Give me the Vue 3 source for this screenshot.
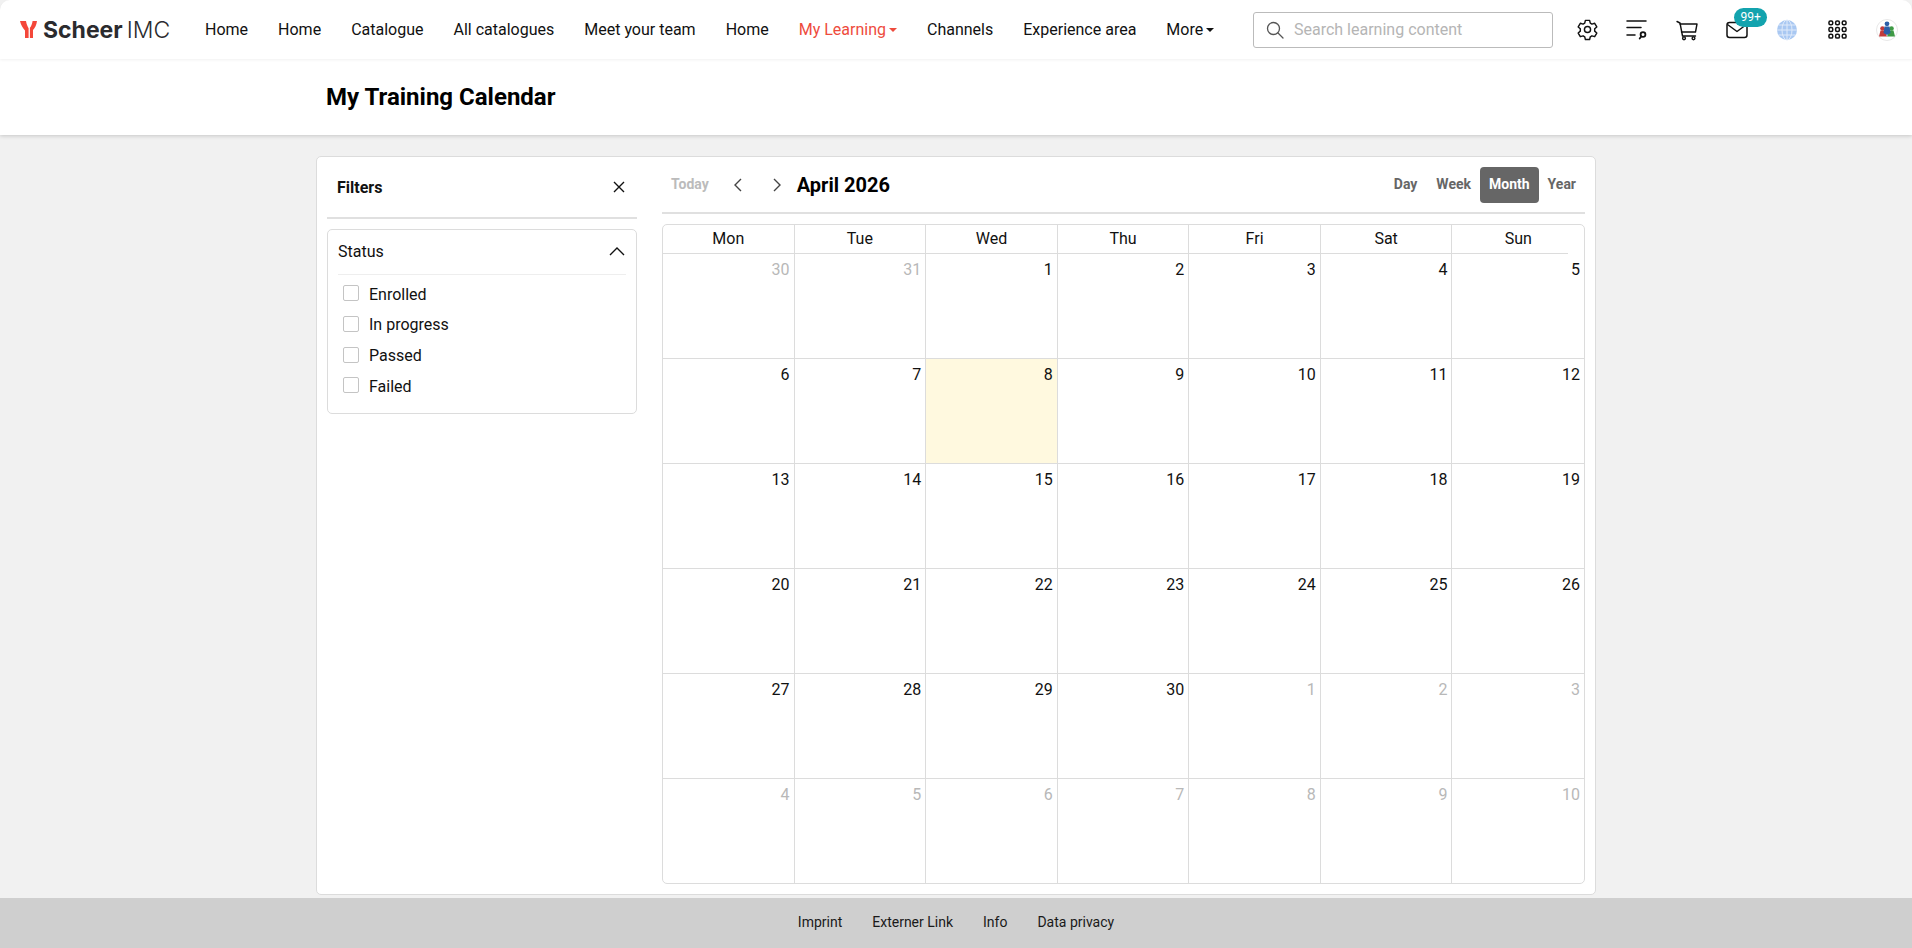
<script setup>
const navItems = [
  { label: 'Home' },
  { label: 'Home' },
  { label: 'Catalogue' },
  { label: 'All catalogues' },
  { label: 'Meet your team' },
  { label: 'Home' },
  { label: 'My Learning', active: true, caret: true },
  { label: 'Channels' },
  { label: 'Experience area' },
  { label: 'More', caret: true }
]

const statuses = ['Enrolled', 'In progress', 'Passed', 'Failed']
const weekdays = ['Mon', 'Tue', 'Wed', 'Thu', 'Fri', 'Sat', 'Sun']
const views = ['Day', 'Week', 'Month', 'Year']
const footerLinks = ['Imprint', 'Externer Link', 'Info', 'Data privacy']

// March 30 up to May 10, six full weeks
const days = []
for (const n of [30, 31]) days.push({ n, muted: true })
for (let n = 1; n <= 30; n++) days.push({ n, today: n === 8 })
for (let n = 1; n <= 10; n++) days.push({ n, muted: true })
</script>

<template>
  <div class="page">
    <header class="topbar">
      <div class="logo">
        <svg class="logo-mark" viewBox="0 0 17 17" width="17" height="17">
          <path d="M0 0h6c.5 3 1.500 5.500 2.600 7.300V17H5V9.500C2.800 7 .8 4 0 0z" fill="#f4473a" />
          <path d="M17 0h-4.400c-.5 3-1.200 5-2.700 6.800V17h3.100V9C15 7 16.500 4 17 0z" fill="#f4473a" />
        </svg>
        <span class="logo-bold">Scheer</span>
        <span class="logo-light">IMC</span>
      </div>

      <nav class="nav">
        <a v-for="(item, i) in navItems" :key="i" class="nav-item" :class="{ active: item.active }">
          {{ item.label }}<span v-if="item.caret" class="caret"></span>
        </a>
      </nav>

      <div class="search">
        <svg viewBox="0 0 20 20" width="20" height="20" fill="none" stroke="#555" stroke-width="1.300">
          <circle cx="8.500" cy="8.500" r="6" />
          <path d="M13 13l5 5" stroke-linecap="round" />
        </svg>
        <input class="search-input" placeholder="Search learning content" />
      </div>

      <div class="icons">
        <span class="icon-slot">
          <svg viewBox="0 0 24 24" width="23" height="23" fill="none" stroke="#111" stroke-width="1.500" stroke-linejoin="round">
            <path d="M9.800 2.500h4.400l.7 2.900 1.700 1 2.900-.9 2.200 3.800-2.200 2v2.400l2.200 2-2.200 3.800-2.900-.9-1.700 1-.7 2.900H9.800l-.7-2.900-1.700-1-2.900.9-2.200-3.800 2.200-2v-2.400l-2.200-2 2.200-3.800 2.900.9 1.700-1z" />
            <circle cx="12" cy="12" r="3.200" />
          </svg>
        </span>
        <span class="icon-slot">
          <svg viewBox="0 0 24 24" width="24" height="24" fill="none" stroke="#111" stroke-width="1.500" stroke-linecap="round">
            <path d="M2 3h19M2 9.500h14M2 17h8" />
            <circle cx="18" cy="16.500" r="2.400" stroke-width="1.800" />
            <path d="M16.200 18.500l-1.500 2" stroke-width="1.800" />
          </svg>
        </span>
        <span class="icon-slot">
          <svg viewBox="0 0 24 24" width="24" height="24" fill="none" stroke="#111" stroke-width="1.400" stroke-linejoin="round" stroke-linecap="round">
            <path d="M2 3.500l3 1.500 2.500 13h13" />
            <path d="M5 6h17l-1.500 8H6.500" />
            <circle cx="9" cy="20.300" r="1.400" />
            <circle cx="18.500" cy="20.300" r="1.400" />
          </svg>
        </span>
        <span class="icon-slot">
          <svg viewBox="0 0 24 24" width="24" height="24" fill="none" stroke="#111" stroke-width="1.500" stroke-linejoin="round">
            <rect x="2" y="4.500" width="20" height="15" rx="2.500" />
            <path d="M2.500 6.500L12 13.500l9.500-7" />
          </svg>
          <span class="badge">99+</span>
        </span>
        <span class="icon-slot">
          <svg viewBox="0 0 22 22" width="22" height="22">
            <circle cx="11" cy="11" r="10" fill="#a9c8f2" />
            <g fill="none" stroke="#dfeafa" stroke-width="1">
              <ellipse cx="11" cy="11" rx="5" ry="10" />
              <path d="M11 1v20M1 11h20M2.500 6h17M2.500 16h17" />
            </g>
          </svg>
        </span>
        <span class="icon-slot">
          <svg viewBox="0 0 20 20" width="19" height="19" fill="none" stroke="#111" stroke-width="1.600">
            <g v-for="x in [3, 10, 17]" :key="x">
              <rect v-for="y in [3, 10, 17]" :key="y" :x="x - 2" :y="y - 2" width="4" height="4" rx="1.500" />
            </g>
          </svg>
        </span>
        <span class="icon-slot">
          <svg viewBox="0 0 22 22" width="22" height="22">
            <circle cx="11" cy="11" r="10.500" fill="#fff" stroke="#e8e8e8" />
            <circle cx="6.500" cy="9.500" r="2.300" fill="#c23a3a" />
            <path d="M3 17.500l1.500-6h4l2.500 6z" fill="#c23a3a" />
            <circle cx="15.500" cy="9.500" r="2.300" fill="#3f9a45" />
            <path d="M11 17.500l2.500-6h4l1.500 6z" fill="#3f9a45" />
            <circle cx="11" cy="4.800" r="2.400" fill="#2b5ea8" />
            <path d="M8.500 7.500h5l1 6.500-3.500 2-3.500-2z" fill="#2b5ea8" />
          </svg>
        </span>
      </div>
    </header>

    <div class="title-band">
      <h1 class="page-title">My Training Calendar</h1>
    </div>

    <main class="main">
      <section class="card">
        <aside class="filters">
          <div class="filters-head">
            <span class="filters-title">Filters</span>
            <svg viewBox="0 0 12 12" width="12" height="12" fill="none" stroke="#111" stroke-width="1.400">
              <path d="M1 1l10 10M11 1L1 11" />
            </svg>
          </div>
          <div class="status-box">
            <div class="status-head">
              <span>Status</span>
              <svg viewBox="0 0 16 9" width="16" height="9" fill="none" stroke="#111" stroke-width="1.400">
                <path d="M1 8l7-7 7 7" />
              </svg>
            </div>
            <label v-for="s in statuses" :key="s" class="status-row">
              <span class="check"></span>{{ s }}
            </label>
          </div>
        </aside>

        <div class="calendar">
          <div class="toolbar">
            <span class="today-btn">Today</span>
            <svg class="arrow" viewBox="0 0 8 14" width="8" height="14" fill="none" stroke="#444" stroke-width="1.400">
              <path d="M7 1L1 7l6 6" />
            </svg>
            <svg class="arrow" viewBox="0 0 8 14" width="8" height="14" fill="none" stroke="#444" stroke-width="1.400">
              <path d="M1 1l6 6-6 6" />
            </svg>
            <span class="month-title">April 2026</span>
            <div class="views">
              <span v-for="v in views" :key="v" class="view-btn" :class="{ selected: v === 'Month' }">{{ v }}</span>
            </div>
          </div>

          <div class="grid">
            <div v-for="w in weekdays" :key="w" class="head-cell">{{ w }}</div>
            <div
              v-for="(d, i) in days"
              :key="i"
              class="day"
              :class="{ muted: d.muted, today: d.today }"
            >
              {{ d.n }}
            </div>
          </div>
        </div>
      </section>
    </main>

    <footer class="footer">
      <a v-for="f in footerLinks" :key="f">{{ f }}</a>
    </footer>
  </div>
</template>

<style>
html,
body {
  margin: 0;
  background: #f1f1f1;
}
</style>

<style scoped>
.page {
  height: 948px;
  display: flex;
  flex-direction: column;
  font-family: Roboto, "Liberation Sans", sans-serif;
  color: #111;
  background: #f1f1f1;
  overflow: hidden;
}

.topbar {
  height: 59px;
  flex: none;
  display: flex;
  align-items: center;
  padding-left: 20px;
  background: #fff;
  border-radius: 10px 10px 0 0;
  box-shadow: 0 1px 3px rgba(0, 0, 0, 0.06);
  position: relative;
  z-index: 2;
}

.logo {
  width: 185px;
  flex: none;
  display: flex;
  align-items: center;
  font-family: Inter, Roboto, sans-serif;
  font-size: 23px;
  color: #2b2b2e;
}

.logo-mark {
  margin-right: 6px;
}

.logo-bold {
  font-weight: 700;
  margin-right: 4px;
}

.logo-light {
  font-weight: 300;
}

.nav {
  display: flex;
  gap: 30px;
  width: 1048px;
  flex: none;
  font-size: 16px;
}

.nav-item {
  white-space: nowrap;
  display: flex;
  align-items: center;
  color: #111;
}

.nav-item.active {
  color: #ee4b3d;
}

.caret {
  margin-left: 3px;
  margin-top: 1px;
  border-left: 4.500px solid transparent;
  border-right: 4.500px solid transparent;
  border-top: 4.500px solid currentColor;
}

.search {
  width: 300px;
  height: 36px;
  flex: none;
  box-sizing: border-box;
  display: flex;
  align-items: center;
  gap: 9px;
  padding-left: 11px;
  border: 1px solid #bbb;
  border-radius: 3px;
}

.search-input {
  border: 0;
  outline: 0;
  padding: 0;
  width: 240px;
  font: 16px Roboto, sans-serif;
  color: #111;
}

.search-input::placeholder {
  color: #b5b5b5;
}

.icons {
  display: flex;
  margin-left: 9px;
}

.icon-slot {
  width: 50px;
  height: 30px;
  display: flex;
  align-items: center;
  justify-content: center;
  position: relative;
}

.badge {
  position: absolute;
  left: 22px;
  top: -7px;
  padding: 0 6.500px;
  height: 19px;
  line-height: 19px;
  border-radius: 10px;
  background: #13a3ae;
  color: #fff;
  font-size: 12px;
}

.title-band {
  height: 76px;
  flex: none;
  background: #fff;
  box-shadow: 0 1px 4px rgba(0, 0, 0, 0.18);
  position: relative;
  z-index: 1;
}

.page-title {
  width: 1260px;
  margin: 0 auto;
  font-size: 24px;
  font-weight: 700;
  line-height: 76px;
  color: #000;
}

.main {
  flex: 1;
  padding-top: 21px;
  min-height: 0;
}

.card {
  width: 1280px;
  height: 739px;
  box-sizing: border-box;
  margin: 0 auto;
  padding: 0 10px;
  display: flex;
  gap: 25px;
  background: #fff;
  border: 1px solid #dcdcdc;
  border-radius: 5px;
}

.filters {
  width: 310px;
  flex: none;
}

.filters-head {
  height: 62px;
  box-sizing: border-box;
  display: flex;
  align-items: center;
  justify-content: space-between;
  padding: 0 12px 0 10px;
  border-bottom: 2px solid #e0e0e0;
}

.filters-title {
  font-size: 16px;
  font-weight: 700;
}

.status-box {
  margin-top: 10px;
  height: 185px;
  box-sizing: border-box;
  padding: 0 10px;
  border: 1px solid #dcdcdc;
  border-radius: 5px;
}

.status-head {
  height: 45px;
  box-sizing: border-box;
  padding: 0 1px 2px 0;
  display: flex;
  align-items: center;
  justify-content: space-between;
  margin-bottom: 4px;
  border-bottom: 1px solid #eee;
  font-size: 16px;
}

.status-row {
  height: 30.670px;
  display: flex;
  align-items: center;
  gap: 10px;
  padding-left: 5px;
  font-size: 16px;
}

.check {
  width: 16px;
  height: 16px;
  box-sizing: border-box;
  margin-top: -2px;
  border: 1px solid #c4c4c4;
  border-radius: 2px;
  background: #fff;
}

.calendar {
  flex: 1;
  min-width: 0;
}

.toolbar {
  height: 57px;
  box-sizing: border-box;
  display: flex;
  align-items: center;
  padding-top: 1px;
  border-bottom: 2px solid #e0e0e0;
  margin-bottom: 10px;
}

.today-btn {
  margin: 0 0 3px 9px;
  font-size: 14px;
  font-weight: 700;
  color: #bbb;
}

.arrow {
  flex: none;
  margin-left: 25px;
}

.arrow + .arrow {
  margin-left: 31px;
}

.month-title {
  margin-left: 16px;
  font-size: 20px;
  font-weight: 700;
  color: #000;
}

.views {
  margin-left: auto;
  margin-bottom: 1px;
  display: flex;
  align-items: center;
  font-size: 14px;
  font-weight: 700;
  color: #666;
}

.view-btn {
  height: 36px;
  line-height: 35px;
  padding: 0 9px;
  border-radius: 4px;
}

.view-btn:first-child {
  margin-right: 1px;
}

.view-btn.selected {
  background: #666;
  color: #fff;
}

.grid {
  display: grid;
  grid-template-columns: repeat(7, 1fr);
  grid-template-rows: 29px repeat(6, 105px);
  border: 1px solid #dcdcdc;
  border-radius: 5px;
  box-sizing: border-box;
  height: 660px;
}

.head-cell {
  position: relative;
  font-size: 16px;
  line-height: 28px;
  text-align: center;
  border-right: 1px solid #dcdcdc;
  border-bottom: 1px solid #dcdcdc;
}

.head-cell:nth-child(7) {
  border-right: 0;
  border-bottom: 0;
  background: linear-gradient(#dcdcdc, #dcdcdc) left bottom / calc(100% - 16px) 1px no-repeat;
}

.day {
  box-sizing: border-box;
  padding: 5px 4px 0 0;
  font-size: 16px;
  line-height: 22px;
  text-align: right;
  border-right: 1px solid #dcdcdc;
  border-bottom: 1px solid #dcdcdc;
}

.day:nth-child(7n) {
  border-right: 0;
}

.day:nth-last-child(-n + 7) {
  border-bottom: 0;
}

.day.muted {
  color: #b8b8b8;
}

.day.today {
  background: #fff9df;
}

.footer {
  height: 50px;
  box-sizing: border-box;
  padding-bottom: 2px;
  flex: none;
  display: flex;
  align-items: center;
  justify-content: center;
  gap: 30px;
  background: #cfcfcf;
  font-size: 14px;
  color: #1a1a1a;
}
</style>
